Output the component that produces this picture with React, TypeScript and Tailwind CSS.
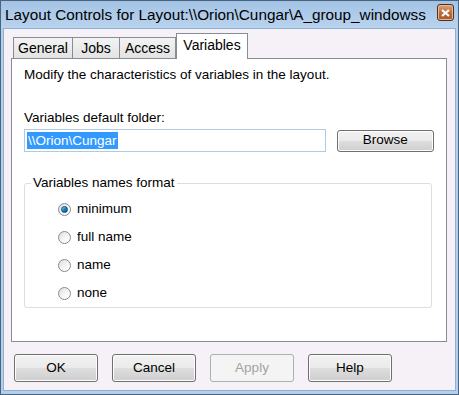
import React from "react";

const font = { fontFamily: '"Liberation Sans", Arial, sans-serif' };

function Radio({ label, checked }: { label: string; checked?: boolean }) {
  return (
    <div className="flex h-[28px] items-center">
      <div className="flex h-[13px] w-[13px] items-center justify-center rounded-full border border-[#8a8a8a] bg-gradient-to-br from-[#dcdcdc] via-[#f4f4f4] to-[#ffffff]">
        {checked && (
          <div className="h-[7px] w-[7px] rounded-full border border-[#0b4d80] bg-gradient-to-br from-[#8fd2f5] via-[#1f7fc0] to-[#0a4f8a]" />
        )}
      </div>
      <span className="ml-[6px] text-[13.5px] leading-[16px] text-black">{label}</span>
    </div>
  );
}

function Btn({ label, disabled, className = "" }: { label: string; disabled?: boolean; className?: string }) {
  if (disabled) {
    return (
      <div className={`flex items-center justify-center rounded-[3px] border border-[#adb2b5] bg-[#f4f4f4] text-[13.5px] text-[#a3a3a3] ${className}`}>
        {label}
      </div>
    );
  }
  return (
    <div
      className={`flex items-center justify-center rounded-[3px] border border-[#707070] bg-[linear-gradient(#f2f2f2_0%,#ebebeb_48%,#dddddd_52%,#cfcfcf_100%)] text-[13.5px] text-black shadow-[inset_0_0_0_1px_#fcfcfc] ${className}`}
    >
      {label}
    </div>
  );
}

export default function App() {
  const tabs = [
    { t: "General", w: "w-[60px]" },
    { t: "Jobs", w: "w-[47px]" },
    { t: "Access", w: "w-[56px]" },
  ];
  return (
    <div style={font} className="flex h-[395px] w-[459px] flex-col border border-[#4a6480] bg-[#b4cfeb]">
      {/* title bar */}
      <div className="flex h-[27px] shrink-0 items-center bg-[linear-gradient(#a3c3e4,#b9d3ee)] pl-[4px] pr-[4px]">
        <span className="text-[15.3px] leading-[18px] text-black">
          Layout Controls for Layout:\\Orion\Cungar\A_group_windowss
        </span>
        <div className="ml-auto mb-[4px] flex h-[17px] w-[17px] items-center justify-center rounded-[3px] border border-[#4f3020] bg-[linear-gradient(#dfa47a,#b86a36_55%,#a85a28)] shadow-[inset_0_0_0_1px_#e8b995]">
          <svg width="9" height="8" viewBox="0 0 9 8">
            <path d="M1 1 L8 7 M8 1 L1 7" stroke="#ffffff" strokeWidth="2.2" />
          </svg>
        </div>
      </div>

      {/* client area */}
      <div className="mx-[2px] mb-[3px] flex flex-1 flex-col border border-[#8fb0d2] bg-[#f5f1f6] px-[7px]">
        <div className="mt-[4px] flex h-[25px] items-end pl-[2px]">
          {tabs.map(({ t, w }) => (
            <div
              key={t}
              className={`flex h-[21px] items-center justify-center border border-b-0 border-l-0 border-[#898c95] bg-[linear-gradient(#f3f3f3,#e3e3e3)] text-[14px] leading-[16px] text-black first:border-l ${w}`}
            >
              {t}
            </div>
          ))}
          <div className="relative z-10 -mb-px flex h-[26px] w-[72px] items-start justify-center border border-b-0 border-[#898c95] bg-white pt-[3px] text-[14px] leading-[16px] text-black">
            Variables
          </div>
        </div>

        <div className="flex h-[284px] w-[436px] flex-col border border-[#898c95] bg-white px-[12px]">
          <div className="mt-[8px] text-[13.5px] leading-[16px] text-black">
            Modify the characteristics of variables in the layout.
          </div>
          <div className="mt-[27px] text-[13.5px] leading-[16px] text-black">Variables default folder:</div>
          <div className="mt-[3px] flex items-center">
            <div className="flex h-[23px] w-[304px] items-center border border-[#abcce4] bg-white pl-[2px]">
              <span className="bg-[#3399ff] px-[1px] text-[13.5px] leading-[17px] text-white">\\Orion\Cungar</span>
            </div>
            <Btn label="Browse" className="ml-[11px] h-[22px] w-[98px]" />
          </div>

          <fieldset className="mt-[23px] h-[133px] w-[408px] rounded-[3px] border border-[#d5dfe5] p-0">
            <legend className="ml-[6px] px-[2px] text-[13.5px] leading-[16px] text-black">Variables names format</legend>
            <div className="ml-[33px] mt-[4px] flex flex-col">
              <Radio label="minimum" checked />
              <Radio label="full name" />
              <Radio label="name" />
              <Radio label="none" />
            </div>
          </fieldset>
        </div>

        <div className="mt-[12px] flex gap-[14px] pl-[3px]">
          <Btn label="OK" className="h-[28px] w-[84px]" />
          <Btn label="Cancel" className="h-[28px] w-[84px]" />
          <Btn label="Apply" disabled className="h-[28px] w-[84px]" />
          <Btn label="Help" className="h-[28px] w-[84px]" />
        </div>
      </div>
    </div>
  );
}
